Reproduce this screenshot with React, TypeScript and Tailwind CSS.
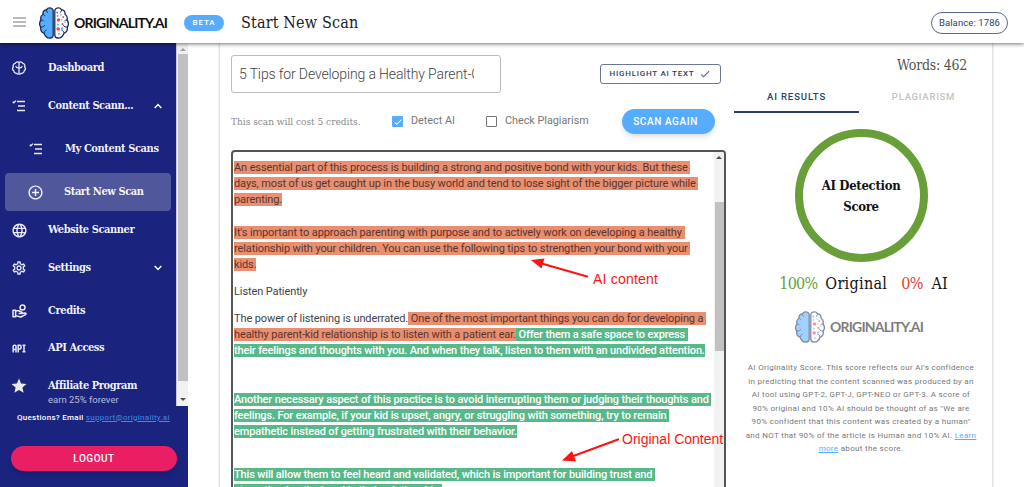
import React from 'react';
import { MdAddCircleOutline, MdLanguage, MdOutlineSettings, MdStar, MdCheck } from 'react-icons/md';

const slab = "font-['DejaVu_Serif_Condensed','DejaVu_Serif',serif]";

function Brain({ className }: { className?: string }) {
  return (
    <svg viewBox="0 0 30 32" className={className} fill="none" strokeLinecap="round" strokeLinejoin="round">
      <path d="M14.2 3.2C13 .6 9.200 0 7.600 2.600C5 3 3.800 5.200 4 7.200C1.800 8.600 1.400 11 2 13C.4 15.200.4 18.200 1.700 20C1.300 23 2.800 25.400 5 26.200C6.200 29.200 8.400 31.300 11 31C13 31 14.200 29.600 14.200 28Z" fill="#56adff" stroke="#1c2b58" strokeWidth="1.300" />
      <path d="M15.8 3.200C17 .6 20.800 0 22.400 2.600C25 3 26.200 5.200 26 7.200C28.200 8.600 28.600 11 28 13C29.600 15.200 29.600 18.200 28.300 20C28.700 23 27.200 25.400 25 26.200C23.800 29.200 21.600 31.300 19 31C17 31 15.800 29.600 15.800 28Z" fill="#fff" stroke="#1c2b58" strokeWidth="1.300" />
      <path d="M7.600 2.600C7.300 4 7.800 5 8.800 5.600M2 13c1.200-.2 2 .2 2.600 1M1.700 20c1.600.4 3-.2 3.800-1.400M5 26.200c0-1.500.8-2.500 2.200-3M4 7.200c1 .2 1.600.8 1.800 1.600M22.400 2.600c.3 1.400-.2 2.400-1.200 3M28 13c-1.200-.2-2 .2-2.600 1M28.300 20c-1.600.4-3-.2-3.800-1.400M25 26.200c0-1.500-.8-2.500-2.200-3" stroke="#1c2b58" strokeWidth="1" />
      <g fill="#f0474b">
        <circle cx="19.500" cy="13" r="1.700" />
        <circle cx="19.200" cy="22" r="1.800" />
        <circle cx="23.500" cy="17" r="1.100" />
        <circle cx="18.200" cy="5.500" r=".9" />
        <circle cx="24.300" cy="10" r=".9" />
      </g>
      <g fill="#56adff">
        <circle cx="18.500" cy="9" r=".9" />
        <circle cx="22" cy="8" r=".8" />
        <circle cx="19" cy="17.500" r="1" />
        <circle cx="23.200" cy="21.500" r="1.200" />
        <circle cx="26" cy="15.500" r=".7" />
        <circle cx="20" cy="27" r=".9" />
        <circle cx="22.800" cy="13" r=".7" />
      </g>
    </svg>
  );
}

const Logo = () => (
  <div className="flex items-center w-[130px]">
    <Brain className="w-[30px] h-8 shrink-0" />
    <span className="ml-[5px] font-[Lato,sans-serif] font-bold text-[14px] leading-none tracking-[-0.8px] text-[#111] whitespace-nowrap">ORIGINALITY.AI</span>
  </div>
);

const DashIcon = () => (
  <svg viewBox="0 0 14 14" className="w-[14px] h-[14px]" fill="none" stroke="currentColor" strokeWidth="1.300" strokeLinecap="round">
    <path d="M7 1.500C5.500.4 3.700 1 3.200 2.400C1.500 2.800.8 4.500 1.300 5.800C.3 7.200.7 9 1.800 9.800C1.900 11.600 3.500 12.600 4.800 12.300C5.500 13.300 6.600 13.200 7 12.600C7.400 13.200 8.500 13.300 9.200 12.300C10.500 12.600 12.100 11.600 12.200 9.800C13.300 9 13.700 7.200 12.700 5.800C13.200 4.500 12.500 2.800 10.800 2.400C10.300 1 8.500.4 7 1.500ZM7 1.500v11M4 5.500c.2 1.200 1.500 1.500 3 1.300M10 5.500c-.2 1.200-1.500 1.500-3 1.300" />
  </svg>
);

const ListIcon = () => (
  <svg viewBox="0 0 14 12" className="w-[14px] h-3" fill="none" stroke="currentColor" strokeWidth="1.300">
    <path d="M5 1.500H13M6 6H13M5 10.500H13" />
    <path d="M.7 1.800l1.100 1L4 .6" />
  </svg>
);

const HandIcon = () => (
  <svg viewBox="0 0 15 14" className="w-[15px] h-[14px]" fill="none" stroke="currentColor" strokeWidth="1.500" strokeLinejoin="round">
    <path d="M1 6.200h2.600v6.500H1zM3.600 6.800h3.200l3 1.400c.5.700 0 1.400-.8 1.400H6.600M9.500 9.500l3.600-.4c1 0 1.200 1.200.4 1.600l-4.700 2.300-5.200-1.400" />
    <circle cx="10.500" cy="3.600" r="2.500" />
  </svg>
);

const ApiIcon = () => (
  <svg viewBox="0 0 14 9" className="w-[14px] h-[9px]" fill="none" stroke="currentColor" strokeWidth="1.500">
    <path d="M1.200 8.500V2.200Q1.200 1.200 2.200 1.200H3Q4 1.200 4 2.200V8.500M1.200 5.500H4M6.200 8.500V1.200H8Q9 1.200 9 2.200V4Q9 5 8 5H6.200M10.500 1.200H13.500M10.500 7.800H13.500M12 1.200V7.800" />
  </svg>
);

const Chevron = ({ up }: { up?: boolean }) => (
  <svg viewBox="0 0 8 6" className={up ? 'w-2 h-[6px] rotate-180' : 'w-2 h-[6px]'} fill="none" stroke="#fff" strokeWidth="1.500">
    <path d="M.7 1L4 4.400 7.300 1" />
  </svg>
);

const nav = [
  { label: 'Dashboard', icon: <DashIcon />, cls: 'mt-[6px] pl-3' },
  { label: 'Content Scann...', icon: <ListIcon />, cls: 'pl-3', arrow: 'up' },
  { label: 'My Content Scans', icon: <ListIcon />, cls: 'mt-[6px] pl-[29px]' },
  { label: 'Start New Scan', icon: <MdAddCircleOutline size={17} />, cls: 'mt-[5px] ml-[5px] mr-[5px] pl-[23px] rounded bg-[#51579b]' },
  { label: 'Website Scanner', icon: <MdLanguage size={17} />, cls: 'pl-3' },
  { label: 'Settings', icon: <MdOutlineSettings size={16} />, cls: 'pl-3', arrow: 'down' },
  { label: 'Credits', icon: <HandIcon />, cls: 'mt-[5px] pl-3' },
  { label: 'API Access', icon: <ApiIcon />, cls: 'pl-3' },
  { label: 'Affiliate Program', sub: 'earn 25% forever', icon: <MdStar size={18} />, cls: 'pl-3' },
];

function Sidebar() {
  return (
    <aside className="w-[188px] shrink-0 h-full bg-[#1a237e] text-white flex flex-col">
      <div className="h-[363px] flex overflow-hidden">
        <div className="w-[176px]">
          {nav.map((n, i) => (
            <div key={i} className={`h-[37.8px] flex items-center ${n.cls}`}>
              <span className="w-[14px] flex justify-center text-white/90 shrink-0 [&>svg]:shrink-0">{n.icon}</span>
              <span className={n.sub ? 'ml-[22px] mt-3 flex flex-col' : 'ml-[22px] flex flex-col'}>
                <span className={`${slab} font-bold text-[11px] leading-[14px] whitespace-nowrap tracking-[-0.42px] text-white/95`}>{n.label}</span>
                {n.sub && <span className="text-[9.500px] leading-[13px] text-white/70">{n.sub}</span>}
              </span>
              {n.arrow && <span className="ml-auto mr-[14px]"><Chevron up={n.arrow === 'up'} /></span>}
            </div>
          ))}
        </div>
        <div className="w-3 bg-[#f1f1f1] border-l border-[#c8cbe0] flex flex-col items-center">
          <span className="mt-[5px] w-0 h-0 border-x-[3px] border-x-transparent border-b-[3px] border-b-[#a3a3a3]"></span>
          <span className="mt-[3px] w-[10px] h-[327px] bg-[#c1c1c1]"></span>
          <span className="mt-[17px] w-0 h-0 border-x-[3px] border-x-transparent border-t-[3px] border-t-[#505050]"></span>
        </div>
      </div>
      <p className="mt-[7px] ml-[17px] text-[8px] leading-[10px] font-medium tracking-[0.29px] whitespace-nowrap">
        Questions? Email <a className="text-[#3f8be0] underline font-normal">support@originality.ai</a>
      </p>
      <button className="mt-[23px] ml-[11px] w-[166px] h-[25px] rounded-full bg-[#e91e63] text-[10px] font-medium tracking-[0.5px] shadow-md">LOGOUT</button>
    </aside>
  );
}

const ai = 'bg-[#e88f72] text-[#5b3529]';
const human = 'bg-[#57b98a] text-white font-medium tracking-[-0.15px]';

const lines: { cls?: string; parts: [string, string][] }[] = [
  { cls: 'mt-[8px]', parts: [[ai, 'An essential part of this process is building a strong and positive bond with your kids. But these ']] },
  { parts: [[ai, 'days, most of us get caught up in the busy world and tend to lose sight of the bigger picture while ']] },
  { parts: [[ai, 'parenting.']] },
  { cls: 'mt-[16.2px]', parts: [[ai, "It's important to approach parenting with purpose and to actively work on developing a healthy "]] },
  { parts: [[ai, 'relationship with your children. You can use the following tips to strengthen your bond with your ']] },
  { parts: [[ai, 'kids.']] },
  { cls: 'mt-[10.8px]', parts: [['', 'Listen Patiently']] },
  { cls: 'mt-[10.8px]', parts: [['', 'The power of listening is underrated.'], [ai, ' One of the most important things you can do for developing a ']] },
  { parts: [[ai, 'healthy parent-kid relationship is to listen with a patient ear.'], [human, ' Offer them a safe space to express ']] },
  { parts: [[human, 'their feelings and thoughts with you. And when they talk, listen to them with '], [human + ' border-b border-[#e58fb0]', 'an undivided'], [human, ' attention.']] },
  { cls: 'mt-[32.4px]', parts: [[human, 'Another necessary aspect of this practice is to avoid interrupting them or judging their thoughts and ']] },
  { parts: [[human, 'feelings. For example, if your kid is upset, angry, or struggling with something, try to remain ']] },
  { parts: [[human, 'empathetic instead of getting frustrated with their behavior.']] },
  { cls: 'mt-[26.500px]', parts: [[human, 'This will allow them to feel heard and validated, which is important for building trust and ']] },
  { parts: [[human, 'strengthening the bond in their relationship.']] },
];

function Editor() {
  return (
    <div className="mt-4 w-[495px] h-[360px] flex shrink-0 border-2 border-[#555] rounded overflow-hidden">
      <div className="flex-1 min-w-0 pl-[1px] text-[11px] tracking-[-0.11px] text-[#444]">
        {lines.map((l, i) => (
          <div key={i} className={`h-[16.2px] leading-[16.2px] whitespace-pre ${l.cls || ''}`}>
            {l.parts.map(([c, t], k) => <span key={k} className={c}>{t}</span>)}
          </div>
        ))}
      </div>
      <div className="w-[10px] shrink-0 bg-[#f1f1f1] flex flex-col items-center">
        <span className="mt-1 w-0 h-0 border-x-[3px] border-x-transparent border-b-[3px] border-b-[#505050] shrink-0"></span>
        <span className="mt-[43px] w-[9px] h-[149px] bg-[#c1c1c1]"></span>
      </div>
    </div>
  );
}

function Results() {
  return (
    <div className="w-[254px] flex flex-col items-center">
      <div className={`${slab} mt-[14px] self-end mr-[21px] text-[14px] leading-4 text-[#555] tracking-[-0.25px]`}>Words: 462</div>
      <div className="mt-2 w-full flex text-[9.500px] font-medium text-center">
        <div className="w-[125px] h-8 leading-[32px] border-b-2 border-[#2b3f6c] text-[#2b3f6c] tracking-[0.9px]">AI RESULTS</div>
        <div className="flex-1 h-8 leading-[32px] text-[#c4c4c4] tracking-[0.75px]">PLAGIARISM</div>
      </div>
      <div className={`${slab} mt-4 w-[133px] h-[133px] rounded-full border-8 border-[#689f38] flex items-center justify-center text-center font-bold text-[13px] leading-[21.500px] text-[#111] tracking-[-0.3px]`}>
        <span className="mt-px">AI Detection<br />Score</span>
      </div>
      <div className={`${slab} mt-3 ml-[5px] flex text-[16px] leading-5 text-[#111] whitespace-nowrap`}>
        <span className="text-[#689f38] tracking-[-0.8px]">100%</span>
        <span className="ml-2 tracking-[0.3px]">Original</span>
        <span className="ml-[14px] text-[#e0403a] tracking-[-0.8px]">0%</span>
        <span className="ml-[9px] tracking-[0px]">AI</span>
      </div>
      <div className="mt-[17px] mr-[2px] opacity-55"><Logo /></div>
      <p className="mt-[18px] text-[8px] leading-[13.500px] tracking-[0.32px] text-center text-[#777] whitespace-nowrap">
        AI Originality Score. This score reflects our AI's confidence<br />
        in predicting that the content scanned was produced by an<br />
        AI tool using GPT-2, GPT-J, GPT-NEO or GPT-3. A score of<br />
        90% original and 10% AI should be thought of as "We are<br />
        90% confident that this content was created by a human"<br />
        and NOT that 90% of the article is Human and 10% AI. <a className="text-[#56adff] underline">Learn</a><br />
        <a className="text-[#56adff] underline">more</a> about the score.
      </p>
    </div>
  );
}

export default function App() {
  return (
    <div className="w-[1024px] h-[487px] overflow-hidden bg-white flex flex-col relative font-[Roboto,sans-serif]">
      <header className="h-[43px] shrink-0 flex items-center bg-white z-10 shadow-[0_1px_4px_rgba(0,0,0,0.55)]">
        <svg viewBox="0 0 13 10" className="ml-[13px] w-[13px] h-[10px]" stroke="#777" strokeWidth="1.200">
          <path d="M0 1h13M0 5h13M0 9h13" />
        </svg>
        <div className="ml-[13px] mt-0.5"><Logo /></div>
        <span className="ml-[15px] mt-[3px] w-10 h-4 rounded-full bg-[#56adff] text-white text-[8px] leading-4 font-medium tracking-[0.9px] text-center">BETA</span>
        <h1 className={`${slab} ml-[17px] mt-0.5 text-[16px] leading-5 text-[#222] tracking-[0.15px] whitespace-nowrap`}>Start New Scan</h1>
        <span className="ml-auto mr-4 mt-0.5 w-[77px] h-[22px] rounded-full border border-[#5a678c] text-[#2b3f6c] text-[9.500px] leading-5 text-center tracking-[0.1px]">Balance: 1786</span>
      </header>

      <div className="flex h-[444px]">
        <Sidebar />
        <main className="ml-[31px] w-[774px] h-full border-x border-[#e2e2e2] shadow-[0_0_2px_rgba(0,0,0,0.15)] pl-[11px] flex">
          <div className="w-[495px] shrink-0 flex flex-col">
            <div className="mt-3 flex">
              <div className="w-[270px] h-[38px] border border-[#bdbdbd] rounded-[3px] pl-[7px] pr-[26px]">
                <div className="overflow-hidden whitespace-nowrap text-[14px] leading-9 tracking-[-0.13px] font-light text-[#444]">5 Tips for Developing a Healthy Parent-Child Bond</div>
              </div>
              <div className="ml-auto mr-[5px] mt-[9px] w-[121px] h-5 border border-[#6b7698] rounded-[3px] text-[#2b3f6c] text-[8px] font-medium tracking-[0.75px] flex items-center justify-center gap-[5px] whitespace-nowrap">
                HIGHLIGHT AI TEXT <MdCheck size={12} className="text-[#5a678c]" />
              </div>
            </div>
            <div className="mt-4 h-[25px] flex items-center text-[10.800px] text-[#777] whitespace-nowrap">
              <span className={`${slab} w-[161px] text-[10px] text-[#8a8a8a]`}>This scan will cost 5 credits.</span>
              <span className="w-[11px] h-[11px] rounded-[1px] bg-[#56adff] flex items-center justify-center text-white"><MdCheck size={10} /></span>
              <span className="ml-2 w-[75px]">Detect AI</span>
              <span className="w-[11px] h-[11px] rounded-[1px] border border-[#777]"></span>
              <span className="ml-2">Check Plagiarism</span>
              <button className="ml-auto mr-[11px] w-[93px] h-[25px] pr-1.5 rounded-full bg-[#56adff] text-white text-[10px] font-medium tracking-[0.6px] shadow-md">SCAN AGAIN</button>
            </div>
            <Editor />
          </div>
          <div className="ml-2"><Results /></div>
        </main>
      </div>

      {/* annotations over the editor */}
      <svg className="absolute left-[528px] top-[256px] w-[62px] h-[24px]" viewBox="0 0 62 24">
        <path d="M59 20.500L12 7" stroke="#fb1414" strokeWidth="2.200" strokeLinecap="round" />
        <path d="M3 4L16.500 2.500 13.500 12.500Z" fill="#fb1414" />
      </svg>
      <span className="absolute left-[593px] top-[271px] font-['Liberation_Sans',sans-serif] text-[14px] leading-4 tracking-[0.2px] text-[#fb1414] whitespace-nowrap">AI content</span>
      <svg className="absolute left-[560px] top-[436px] w-[62px] h-[28px]" viewBox="0 0 62 28">
        <path d="M58 3.500L12 20.500" stroke="#fb1414" strokeWidth="2.200" strokeLinecap="round" />
        <path d="M2 24.500L12 15 16 25.500Z" fill="#fb1414" />
      </svg>
      <span className="absolute left-[622px] top-[431px] font-['Liberation_Sans',sans-serif] text-[14px] leading-4 text-[#fb1414] whitespace-nowrap">Original Content</span>
    </div>
  );
}
